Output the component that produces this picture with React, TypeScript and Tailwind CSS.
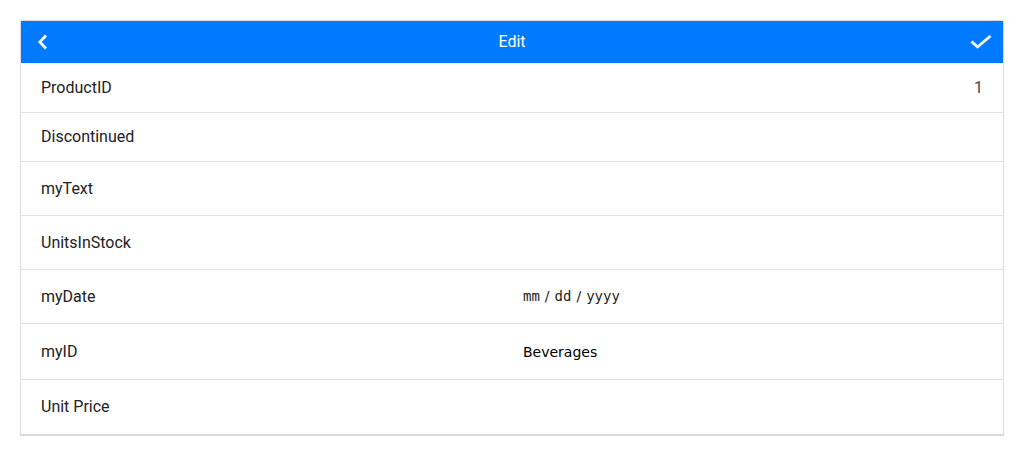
import React from "react";

type Row = {
    label: string;
    h: string;
    value?: React.ReactNode;
    right?: string;
};

const DateMask = () => (
    <span className="flex items-center font-['DejaVu_Sans_Mono',monospace] text-[14px] text-[#222]">
        <span>mm</span>
        <span className="px-[5px] font-['DejaVu_Sans',sans-serif]">/</span>
        <span>dd</span>
        <span className="px-[5px] font-['DejaVu_Sans',sans-serif]">/</span>
        <span>yyyy</span>
    </span>
);

const rows: Row[] = [
    { label: "ProductID", h: "h-[50px]", right: "1" },
    { label: "Discontinued", h: "h-[49px]" },
    { label: "myText", h: "h-[54px]" },
    { label: "UnitsInStock", h: "h-[54px]" },
    { label: "myDate", h: "h-[54px]", value: <DateMask /> },
    {
        label: "myID",
        h: "h-[56px]",
        value: <span className="font-['DejaVu_Sans',sans-serif] text-[14px] text-black">Beverages</span>,
    },
    { label: "Unit Price", h: "h-[54px]" },
];

export default function App() {
    return (
        <div className="min-h-[454px] bg-white p-5 font-['Roboto',sans-serif]">
            <div className="border border-[#dcdcdc] border-b-2 border-b-[#d8d8d8]">
                {/* Barra superior */}
                <div className="grid h-[42px] grid-cols-[1fr_auto_1fr] items-center bg-[#007aff] px-[17px] text-white">
                    <svg className="h-[16px] w-[10px]" viewBox="0 0 10 16" fill="none" stroke="currentColor">
                        <path d="M8 1.5L1.8 8 8 14.5" strokeWidth={2.6} />
                    </svg>
                    <span className="text-[16px]">Edit</span>
                    <svg className="mr-[-6px] h-[14px] w-[22px] justify-self-end" viewBox="0 0 22 14" fill="none" stroke="currentColor">
                        <path d="M1.5 6.5L7.5 12 20.5 1" strokeWidth={2.8} />
                    </svg>
                </div>

                {/* Filas */}
                {rows.map((row, i) => (
                    <div
                        key={row.label}
                        className={`grid grid-cols-2 items-center ${row.h} ${
                            i < rows.length - 1 ? "border-b border-[#e0e0e0]" : ""
                        }`}
                    >
                        <span className="pl-5 text-[16px] text-[#222]">{row.label}</span>
                        <div className="flex items-center justify-between pl-[11px] pr-5">
                            <div>{row.value}</div>
                            {row.right && <span className="text-[16px] text-[#444]">{row.right}</span>}
                        </div>
                    </div>
                ))}
            </div>
        </div>
    );
}
